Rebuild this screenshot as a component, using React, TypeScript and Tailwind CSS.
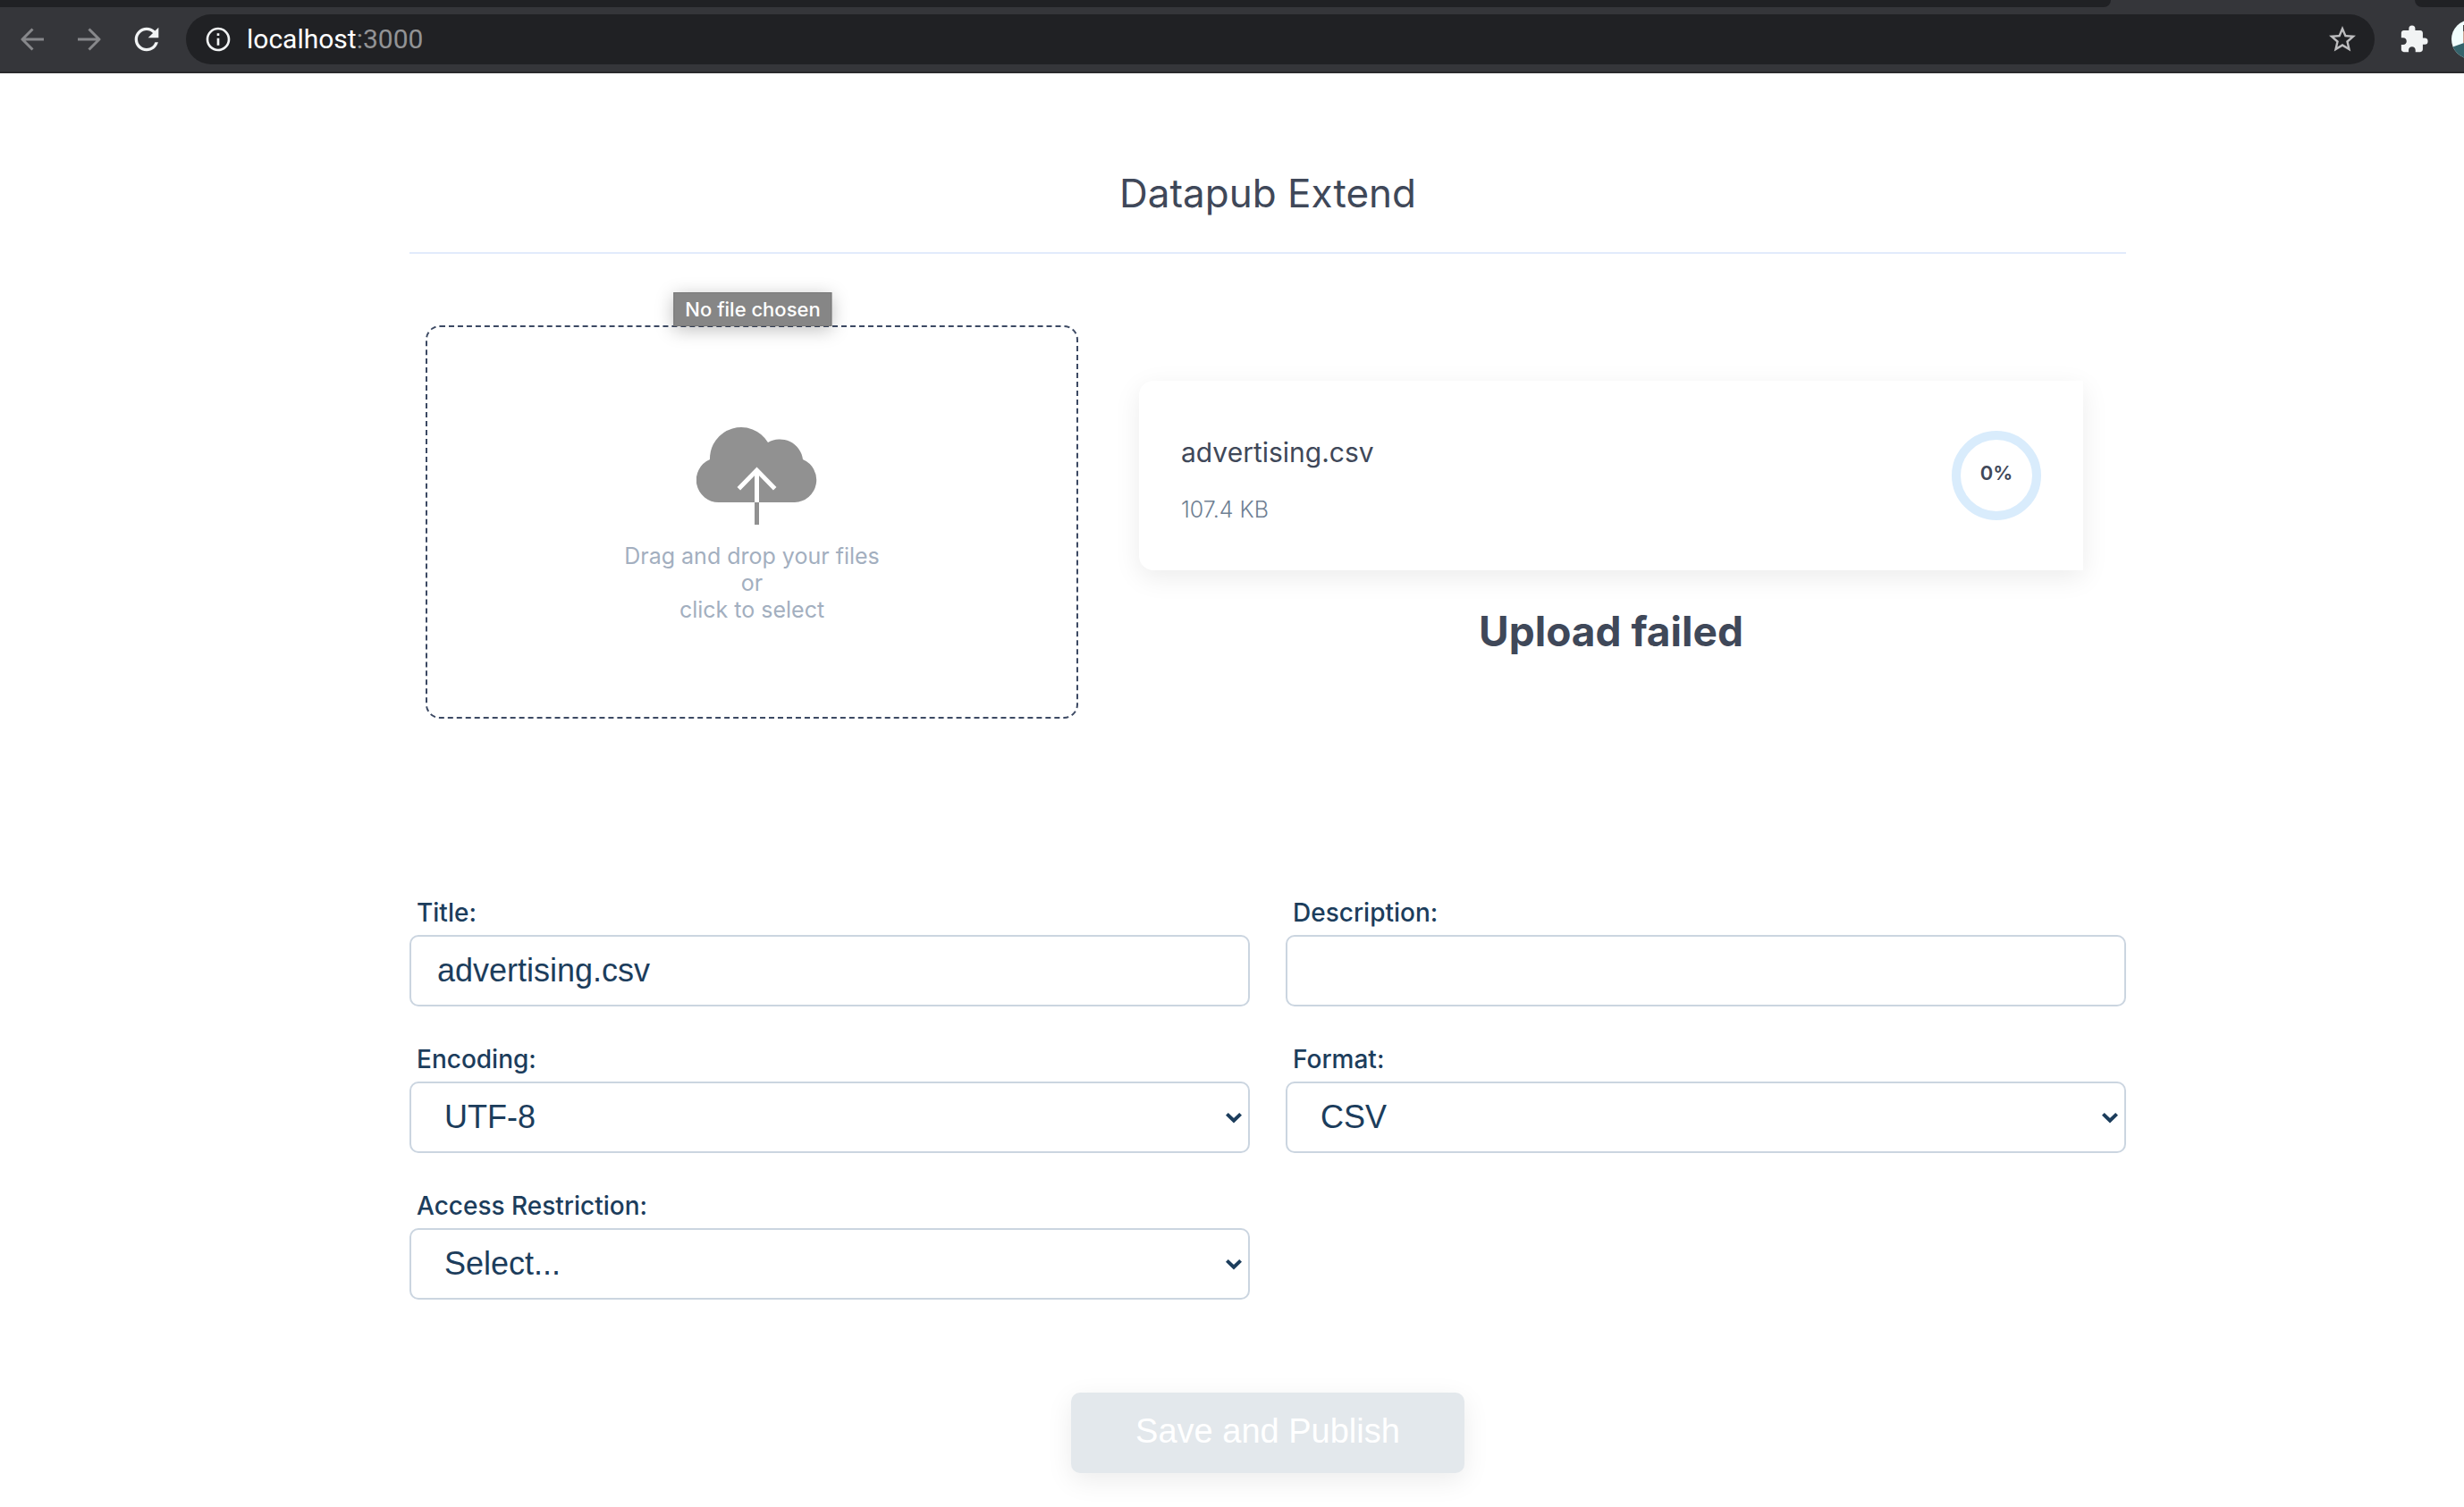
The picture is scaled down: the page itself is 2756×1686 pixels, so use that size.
import React, { useState } from "react";
import { MdExtension, MdInfoOutline, MdRefresh, MdStarBorder } from "react-icons/md";

function BackArrow() {
  return (
    <svg width="26" height="26" viewBox="0 0 26 26" fill="none" stroke="currentColor" strokeWidth="3" aria-hidden="true">
      <path d="M26 13H2M13.500 1.500L2 13l11.500 11.500" strokeLinejoin="round" />
    </svg>
  );
}

function ForwardArrow() {
  return (
    <svg width="26" height="26" viewBox="0 0 26 26" fill="none" stroke="currentColor" strokeWidth="3" aria-hidden="true">
      <path d="M0 13h24M12.500 1.500L24 13L12.500 24.500" strokeLinejoin="round" />
    </svg>
  );
}

function BrowserBar() {
  return (
    <header>
      <div className="flex h-2 bg-[#35363a]">
        <div className="grow rounded-br-lg bg-[#202124]" />
        <div className="w-[340px]" />
        <div className="w-[55px] rounded-bl-lg bg-[#202124]" />
      </div>
      <div className="flex h-[74px] items-center overflow-hidden border-b-2 border-[#29292c] bg-[#35363a] pl-[23px] text-[#f1f3f4]">
        <button type="button" aria-label="Back" className="mr-[38px] text-[#87888b]">
          <BackArrow />
        </button>
        <button type="button" aria-label="Forward" className="mr-[31px] text-[#87888b]">
          <ForwardArrow />
        </button>
        <button type="button" aria-label="Reload" className="mr-6">
          <MdRefresh size={40} />
        </button>
        <div className="flex h-14 min-w-0 grow items-center rounded-full bg-[#202124] pl-5 pr-[18px]">
          <MdInfoOutline size={32} className="mr-4 shrink-0" />
          <div className="grow font-[Roboto,sans-serif] text-[30px] leading-9 text-[#929395]">
            <span className="text-white">localhost</span>:3000
          </div>
          <button type="button" aria-label="Bookmark this page" className="text-[#bdbdbf]">
            <MdStarBorder size={36} />
          </button>
        </div>
        <button type="button" aria-label="Extensions" className="ml-[27px] shrink-0">
          <MdExtension size={34} />
        </button>
        <button type="button" aria-label="Profile" className="-mr-[30px] ml-[25px] shrink-0">
          <svg width="44" height="44" viewBox="0 0 44 44" aria-hidden="true">
            <clipPath id="avatar">
              <circle cx="22" cy="22" r="22" />
            </clipPath>
            <g clipPath="url(#avatar)">
              <path fill="#f1fdfd" d="M0 0h44v44H0z" />
              <path fill="#c9a190" d="M13 12h17v14H13z" />
              <path fill="#4a4644" d="M13 6h17v7H13z" />
              <path fill="#35636b" d="M0 31l14-5h30v18H0z" />
            </g>
          </svg>
        </button>
      </div>
    </header>
  );
}

function DropZone() {
  return (
    <div className="relative pl-[18px] pr-5">
      <label
        htmlFor="file"
        className="flex h-[440px] cursor-pointer flex-col items-center justify-center rounded-2xl border-2 border-dashed border-[#3c4963] pt-1.5 text-center text-[25px] leading-[30px] text-[#a3afbf]"
      >
        <svg width="135" height="110" viewBox="0 0 135 110" fill="none" className="mb-5 ml-[10px]" aria-hidden="true">
          <path
            fill="#919191"
            d="M25 85A25 25 0 0 1 15 37A35 35 0 0 1 80 18A26 26 0 0 1 119 37A25 25 0 0 1 110 85Z"
          />
          <path stroke="#fff" strokeWidth="5" d="M67.500 85V49M47.300 69.800L67.500 49l20.200 20.800" />
          <path stroke="#919191" strokeWidth="5" d="M67.500 85v25" />
        </svg>
        <span>Drag and drop your files</span>
        <span>or</span>
        <span>click to select</span>
      </label>
      <input id="file" type="file" className="sr-only" />
      <div
        role="tooltip"
        className="absolute -top-[37px] left-1/2 flex h-[38px] -translate-x-1/2 items-center whitespace-nowrap border border-[#777] bg-[#868686] px-3 text-[22px] font-medium text-white shadow-[0_4px_20px_rgba(0,0,0,0.25)]"
      >
        No file chosen
      </div>
    </div>
  );
}

function UploadStatus() {
  return (
    <div className="px-12 pt-[62px]">
      <div className="flex h-[212px] items-center justify-between rounded-l-2xl bg-white px-[47px] shadow-[0_8px_30px_rgba(0,0,0,0.08)]">
        <div className="pt-[11px]">
          <p className="text-[30px] leading-10 text-[#3f4859]">advertising.csv</p>
          <p className="mt-6 text-[25px] leading-10 font-light text-[#6f8093]">107.4 KB</p>
        </div>
        <div className="flex size-[100px] items-center justify-center rounded-full border-[10px] border-[#d9ecfc] pb-1.5 text-[22px] font-semibold text-[#3f4859]">
          0%
        </div>
      </div>
      <h2 className="mt-[38px] text-center text-[46px] leading-[60px] font-bold text-[#3f4859]">Upload failed</h2>
    </div>
  );
}

const controlClass =
  "block h-20 w-full appearance-none rounded-[10px] border-2 border-[#cbd5e0] bg-white font-['Liberation_Sans',Arial,sans-serif] text-4xl text-[#1c3d5c]";

function Field({ id, label, children }: { id: string; label: string; children: React.ReactNode }) {
  return (
    <div>
      <label htmlFor={id} className="block pb-1.5 pl-2 text-[28px] leading-[38px] font-medium text-[#1c3d5c]">
        {label}
      </label>
      {children}
    </div>
  );
}

function TextField({ id, label, initial }: { id: string; label: string; initial: string }) {
  const [value, setValue] = useState(initial);
  return (
    <Field id={id} label={label}>
      <input
        id={id}
        type="text"
        value={value}
        onChange={(e) => setValue(e.target.value)}
        className={controlClass + " px-[29px]"}
      />
    </Field>
  );
}

function SelectField({ id, label, options }: { id: string; label: string; options: string[] }) {
  return (
    <Field id={id} label={label}>
      <div className="relative">
        <select id={id} className={controlClass + " px-[37px]"}>
          {options.map((o) => (
            <option key={o}>{o}</option>
          ))}
        </select>
        <svg
          width="20"
          height="14"
          viewBox="0 0 20 14"
          fill="none"
          stroke="#1c3d5c"
          strokeWidth="4"
          className="pointer-events-none absolute top-[34px] right-2"
          aria-hidden="true"
        >
          <path d="M2.400 2.400L10 9.800l7.600-7.400" />
        </svg>
      </div>
    </Field>
  );
}

export default function App() {
  return (
    <div className="min-h-screen bg-white font-[Inter,sans-serif]">
      <BrowserBar />
      <main className="pl-20">
        <div className="mx-auto max-w-[1920px] pt-[104px]">
          <h1 className="border-b-2 border-[#e2ebfc] pb-9 text-center text-[44px] leading-[60px] text-[#3f4859]">
            Datapub Extend
          </h1>
          <section className="grid grid-cols-[2fr_3fr] pt-20">
            <DropZone />
            <UploadStatus />
          </section>
          <form onSubmit={(e) => e.preventDefault()} className="pt-[198px]">
            <div className="grid grid-cols-2 gap-10">
              <TextField id="title" label="Title:" initial="advertising.csv" />
              <TextField id="description" label="Description:" initial="" />
              <SelectField id="encoding" label="Encoding:" options={["UTF-8"]} />
              <SelectField id="format" label="Format:" options={["CSV"]} />
              <SelectField id="access" label="Access Restriction:" options={["Select..."]} />
            </div>
            <button
              type="submit"
              disabled
              className="mx-auto mt-[104px] block h-[90px] w-[440px] rounded-[10px] bg-[#e3e8ec] pb-1 font-['Liberation_Sans',Arial,sans-serif] text-[38px] text-white shadow-[0_8px_30px_rgba(0,0,0,0.08)]"
            >
              Save and Publish
            </button>
          </form>
        </div>
      </main>
    </div>
  );
}
